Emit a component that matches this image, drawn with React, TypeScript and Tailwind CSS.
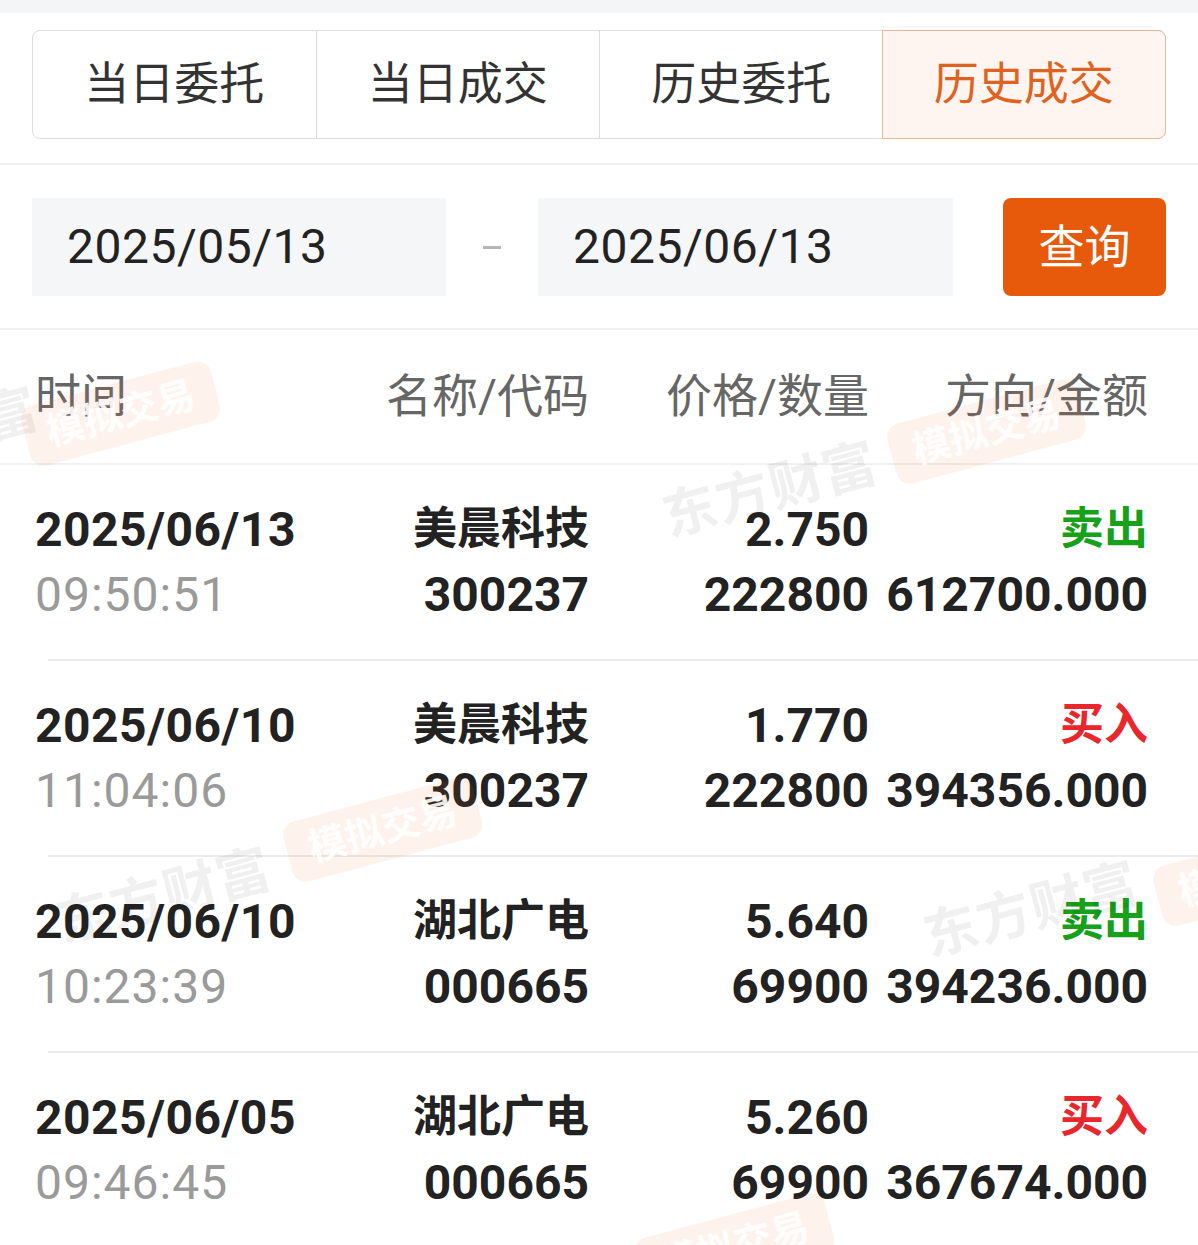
import React from 'react';

const tabs = ['当日委托', '当日成交', '历史委托', '历史成交'];

type Trade = {
  date: string;
  time: string;
  name: string;
  code: string;
  price: string;
  qty: string;
  side: 'buy' | 'sell';
  amount: string;
};

const trades: Trade[] = [
  { date: '2025/06/13', time: '09:50:51', name: '美晨科技', code: '300237', price: '2.750', qty: '222800', side: 'sell', amount: '612700.000' },
  { date: '2025/06/10', time: '11:04:06', name: '美晨科技', code: '300237', price: '1.770', qty: '222800', side: 'buy', amount: '394356.000' },
  { date: '2025/06/10', time: '10:23:39', name: '湖北广电', code: '000665', price: '5.640', qty: '69900', side: 'sell', amount: '394236.000' },
  { date: '2025/06/05', time: '09:46:45', name: '湖北广电', code: '000665', price: '5.260', qty: '69900', side: 'buy', amount: '367674.000' },
];

// watermark pairs drawn over the list
const marks = [
  { brand: 'left-[-175px] top-[438px]', badge: 'left-[26px] top-[408px]' },
  { brand: 'left-[664px] top-[492px]', badge: 'left-[892px] top-[426px]' },
  { brand: 'left-[58px] top-[898px]', badge: 'left-[288px] top-[824px]' },
  { brand: 'left-[925px] top-[912px]', badge: 'left-[1158px] top-[868px]' },
  { brand: 'left-[420px] top-[1305px]', badge: 'left-[640px] top-[1240px]' },
];

function Watermarks() {
  return (
    <div className="pointer-events-none absolute inset-0 overflow-hidden">
      {marks.map((m, i) => (
        <React.Fragment key={i}>
          <div className={`absolute ${m.brand} -rotate-[15deg] origin-left whitespace-nowrap text-[54px] font-bold leading-none tracking-[1px] text-black/[0.06]`}>
            东方财富
          </div>
          <div className={`absolute ${m.badge} -rotate-[15deg] origin-left whitespace-nowrap rounded-[14px] bg-[#f86a32]/[0.09] px-[22px] py-[12px] text-[38px] font-bold leading-none text-white/90`}>
            模拟交易
          </div>
        </React.Fragment>
      ))}
    </div>
  );
}

export default function App() {
  return (
    <div
      className="relative w-[1198px] h-[1245px] overflow-hidden bg-white text-[#333]"
      style={{ fontFamily: 'Roboto, "Noto Sans CJK SC", sans-serif' }}
    >
      <div className="h-[13px] bg-[#f4f5f7]" />

      {/* Tabs */}
      <div className="px-[32px] pt-[17px] pb-[24px]">
        <div className="flex h-[109px] rounded-[8px] border border-[#dcdcdc]">
          {tabs.map((t, i) => {
            const active = i === tabs.length - 1;
            return (
              <div
                key={t}
                className={`flex flex-1 items-center justify-center text-[45px] ${
                  i > 0 ? 'border-l border-[#dcdcdc]' : ''
                } ${
                  active
                    ? '-m-px rounded-r-[8px] border border-[#e7b79c] bg-[#fff5f0] text-[#e0621f]'
                    : 'text-[#333]'
                }`}
              >
                {t}
              </div>
            );
          })}
        </div>
      </div>
      <div className="h-[2px] bg-[#f2f2f2]" />

      {/* Date range */}
      <div className="flex items-center px-[32px] pt-[33px] pb-[32px]">
        <div className="flex h-[98px] w-[414px] items-center bg-[#f5f6f8] pl-[35px] text-[48px] tracking-[0.5px] text-[#222]">2025/05/13</div>
        <div className="flex w-[92px] justify-center">
          <div className="h-[3px] w-[18px] bg-[#b5b5b5]" />
        </div>
        <div className="flex h-[98px] w-[415px] items-center bg-[#f5f6f8] pl-[35px] text-[48px] tracking-[0.5px] text-[#222]">2025/06/13</div>
        <div className="ml-auto flex h-[98px] w-[163px] items-center justify-center rounded-[8px] bg-[#e85a0b] text-[46px] text-white">
          查询
        </div>
      </div>
      <div className="h-[2px] bg-[#f2f2f2]" />

      {/* Header */}
      <div className="flex h-[133px] items-center pl-[35px] pr-[50px] text-[46px] text-[#666]">
        <div className="w-[300px]">时间</div>
        <div className="w-[254px] text-right">名称/代码</div>
        <div className="w-[280px] text-right">价格/数量</div>
        <div className="w-[279px] text-right">方向/金额</div>
      </div>
      <div className="h-[2px] bg-[#f0f0f0]" />

      {/* Rows */}
      {trades.map((r, i) => (
        <div key={i}>
          <div className="flex h-[194px] items-center pl-[35px] pr-[50px] font-bold leading-[65px] text-[#222]">
            <div className="w-[300px]">
              <div className="text-[48px] tracking-[0.5px]">{r.date}</div>
              <div className="text-[48px] font-normal tracking-[1px] text-[#9a9a9a]">{r.time}</div>
            </div>
            <div className="w-[254px] text-right">
              <div className="text-[44px]">{r.name}</div>
              <div className="text-[48px]">{r.code}</div>
            </div>
            <div className="w-[280px] text-right text-[48px]">
              <div>{r.price}</div>
              <div>{r.qty}</div>
            </div>
            <div className="w-[279px] text-right">
              <div className={`text-[44px] ${r.side === 'sell' ? 'text-[#17a01a]' : 'text-[#e8262b]'}`}>
                {r.side === 'sell' ? '卖出' : '买入'}
              </div>
              <div className="text-[48px]">{r.amount}</div>
            </div>
          </div>
          <div className="ml-[48px] h-[2px] bg-[#ececec]" />
        </div>
      ))}

      <Watermarks />
    </div>
  );
}
